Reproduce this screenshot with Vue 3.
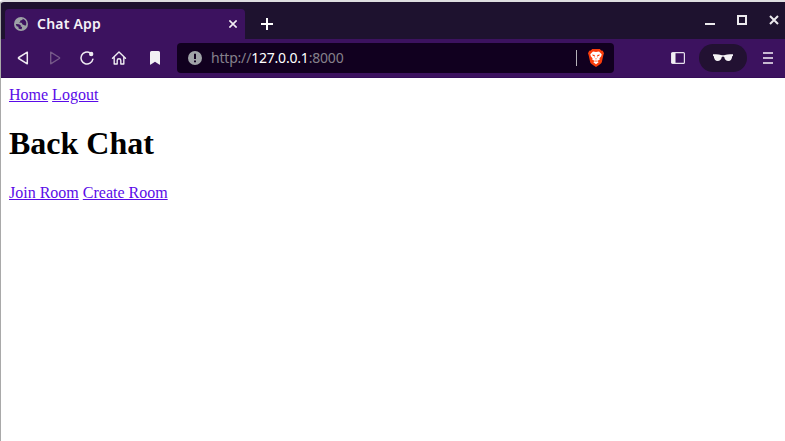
<script setup>
const topLinks = ['Home', 'Logout']
const roomLinks = ['Join Room', 'Create Room']
</script>

<template>
  <div class="window">
    <header class="tabbar">
      <div class="tab">
        <svg class="globe" width="14" height="14" viewBox="0 0 14 14">
          <circle cx="7" cy="7" r="7" fill="#9da1a6" />
          <path d="M8.7 1.8 L8.4 3 L6.4 3.5 L6.1 4.8 L5 5.5 L7.6 5.8 L8.8 7.8 L10.4 8 L11 9 L12.2 7.8 A5.3 5.3 0 0 0 8.7 1.8Z M1.8 7 L5 7.2 L6.8 8.3 L6.6 9.5 L8.1 10 L7.6 12.2 A5.3 5.3 0 0 1 4.6 11.6 L4.4 9.8 L2.6 9.2Z" fill="#3c125f" />
        </svg>
        <span class="tab-title">Chat App</span>
        <svg class="tab-close" width="8" height="8" viewBox="0 0 8 8">
          <path d="M.4 .4 7.6 7.6M7.6 .4 .4 7.6" stroke="#f1edf3" stroke-width="1.6" />
        </svg>
      </div>
      <svg class="new-tab" width="12" height="12" viewBox="0 0 12 12">
        <path d="M6 0V12M0 6H12" stroke="#fff" stroke-width="2" />
      </svg>
      <div class="controls">
        <svg width="10" height="10" viewBox="0 0 10 10"><path d="M0 9H10" stroke="#ebe9ed" stroke-width="2" /></svg>
        <svg width="10" height="10" viewBox="0 0 10 10"><path d="M1 1H9V9H1Z" fill="none" stroke="#ebe9ed" stroke-width="2" /></svg>
        <svg width="10" height="10" viewBox="0 0 10 10"><path d="M1 1 9 9M9 1 1 9" stroke="#ebe9ed" stroke-width="2" /></svg>
      </div>
    </header>

    <nav class="toolbar">
      <svg class="back" width="12" height="16" viewBox="0 0 12 16">
        <path d="M10.3 2.2V13.8L1.7 8.5Q1 8 1.7 7.5Z" fill="none" stroke="#eeeaf1" stroke-width="1.5" stroke-linejoin="round" />
      </svg>
      <svg class="forward" width="12" height="16" viewBox="0 0 12 16">
        <path d="M1.7 2.2V13.8L10.3 8.5Q11 8 10.3 7.5Z" fill="none" stroke="#755888" stroke-width="1.4" stroke-linejoin="round" />
      </svg>
      <svg class="reload" width="16" height="16" viewBox="0 0 16 16">
        <path d="M11.2 2.9A6 6 0 1 0 13.9 9.2" fill="none" stroke="#eeeaf1" stroke-width="1.5" stroke-linecap="round" />
        <circle cx="12.2" cy="4" r="2.2" fill="#eeeaf1" />
      </svg>
      <svg class="home" width="16" height="16" viewBox="0 0 16 16">
        <path d="M1.5 8.3 8 1.9 14.5 8.3M3.2 7.2V14H6.2V10.4Q6.2 8.8 8 8.8Q9.8 8.8 9.8 10.4V14H12.8V7.2" fill="none" stroke="#eeeaf1" stroke-width="1.4" stroke-linejoin="round" stroke-linecap="round" />
      </svg>
      <svg class="bookmark" width="10" height="14" viewBox="0 0 10 14">
        <path d="M1.5 0H8.5Q10 0 10 1.5V13.2Q10 14 9.2 13.5L5 10.8 .8 13.5Q0 14 0 13.2V1.5Q0 0 1.5 0Z" fill="#f1eff3" />
      </svg>

      <div class="address">
        <svg class="info" width="14" height="14" viewBox="0 0 14 14">
          <circle cx="7" cy="7" r="7" fill="#a0a3a8" />
          <path d="M6 2.8H8V8H6ZM6 9.4H8V11.3H6Z" fill="#11001f" />
        </svg>
        <span class="url">http://<b>127.0.0.1</b>:8000</span>
        <i class="divider"></i>
        <svg class="shield" width="16" height="18" viewBox="0 0 16 18">
          <path d="M4.2 0H11.8L13.2 1.5 14.8 1.7 16 4.3 15.4 6 13.8 13.2Q13.2 14.8 8 18Q2.8 14.8 2.2 13.2L.6 6 0 4.3 1.2 1.7 2.8 1.5Z" fill="#fb3d0b" />
          <path d="M5 2.5 8 3 11 2.5 13.7 5.3 13.2 7.2 11.5 9.3 11.7 10.8 9.3 11.7 10.6 13.2 8 15.2 5.4 13.2 6.7 11.7 4.3 10.8 4.5 9.3 2.8 7.2 2.3 5.3Z" fill="#fff" />
          <path d="M4 5.6 6.9 6.1 6.5 7.3 6.9 9.2 8 9.8 9.1 9.2 9.5 7.3 9.1 6.1 12 5.6 11 7 8.9 7.2 9.1 9.6 8 10.5 6.9 9.6 7.1 7.2 5 7ZM6 12.2 8 11.5 10 12.2 8 12.5Z" fill="#fb3d0b" />
        </svg>
      </div>

      <svg class="sidebar" width="14" height="12" viewBox="0 0 14 12">
        <rect x=".6" y=".6" width="12.8" height="10.8" rx="1" fill="none" stroke="#e5dfeb" stroke-width="1.2" />
        <path d="M1 1H4.5V11H1Z" fill="#f1eff3" />
      </svg>
      <div class="private">
        <svg width="20" height="8" viewBox="0 0 20 8">
          <path d="M0 .3Q5 -.2 8 .9Q10 1.5 12 .9Q15 -.2 20 .3V1.7L19.2 2.2Q18.8 7 15.4 7Q12 7 11.2 3Q10 1.8 8.8 3Q8 7 4.6 7Q1.2 7 .8 2.2L0 1.7Z" fill="#f5f3f6" />
        </svg>
      </div>
      <svg class="menu" width="10" height="12" viewBox="0 0 10 12">
        <path d="M0 1H10M0 6H10M0 11H10" stroke="#c7b9d1" stroke-width="1.8" />
      </svg>
    </nav>

    <main class="page">
      <div class="links"><template v-for="(l, i) in topLinks" :key="l">{{ i ? ' ' : '' }}<a href="#">{{ l }}</a></template></div>
      <h1>Back Chat</h1>
      <div class="links"><template v-for="(l, i) in roomLinks" :key="l">{{ i ? ' ' : '' }}<a href="#">{{ l }}</a></template></div>
    </main>
  </div>
</template>

<style>
body { background: #fff; overflow: hidden; }
</style>

<style scoped>
.window {
  box-sizing: border-box;
  height: 441px;
  border-left: 1px solid #a9a9a9;
  border-top: 2px solid #dedee0;
  border-top-left-radius: 4px;
  overflow: hidden;
}
svg { display: block; flex: none; }
.tabbar {
  display: flex;
  height: 37px;
  background: #1e122f;
}
.tab {
  box-sizing: border-box;
  display: flex;
  align-items: center;
  width: 240px;
  height: 30px;
  margin: 7px 0 0 4px;
  padding: 0 8px 0 9px;
  background: #3c125f;
  border-radius: 4px 4px 0 0;
}
.tab-title {
  margin-left: 9px;
  font: 600 14px/20px "Noto Sans", sans-serif;
  letter-spacing: .2px;
  color: #f5f1f7;
  white-space: nowrap;
}
.tab-close { margin-left: auto; }
.new-tab { margin: 16px 0 0 16px; }
.controls {
  display: flex;
  gap: 22px;
  margin: 13px 6px 0 auto;
}
.toolbar {
  display: flex;
  align-items: center;
  height: 39px;
  box-sizing: border-box;
  border-bottom: 1px solid #350c58;
  background: #3c125f;
}
.back { margin-left: 16px; }
.forward { margin-left: 20px; }
.reload { margin-left: 18px; }
.home { margin-left: 16px; }
.bookmark { margin-left: 23px; }
.address {
  display: flex;
  align-items: center;
  box-sizing: border-box;
  width: 437px;
  height: 30px;
  margin-left: 17px;
  padding: 0 10px 0 11px;
  background: #11001f;
  border-radius: 4px;
}
.url {
  margin-left: 9px;
  font: 14px/20px "Noto Sans", sans-serif;
  letter-spacing: -.2px;
  color: #85808b;
  white-space: nowrap;
}
.url b { font-weight: 400; color: #fff; }
.divider {
  width: 1px;
  height: 16px;
  margin: 0 11px 0 auto;
  background: #b5b1b9;
}
.sidebar { margin-left: 57px; }
.private {
  display: flex;
  align-items: center;
  justify-content: center;
  width: 48px;
  height: 28px;
  margin-left: 14px;
  border-radius: 14px;
  background: #221132;
}
.menu { margin-left: 16px; }
.page {
  padding: 8px;
  font: 16px/18px "Liberation Serif", serif;
  color: #000;
}
h1 {
  margin: 21px 0 22px;
  font-size: 32px;
  line-height: 37px;
  font-weight: 700;
}
a { color: #5a0be8; text-decoration: underline; }
</style>
